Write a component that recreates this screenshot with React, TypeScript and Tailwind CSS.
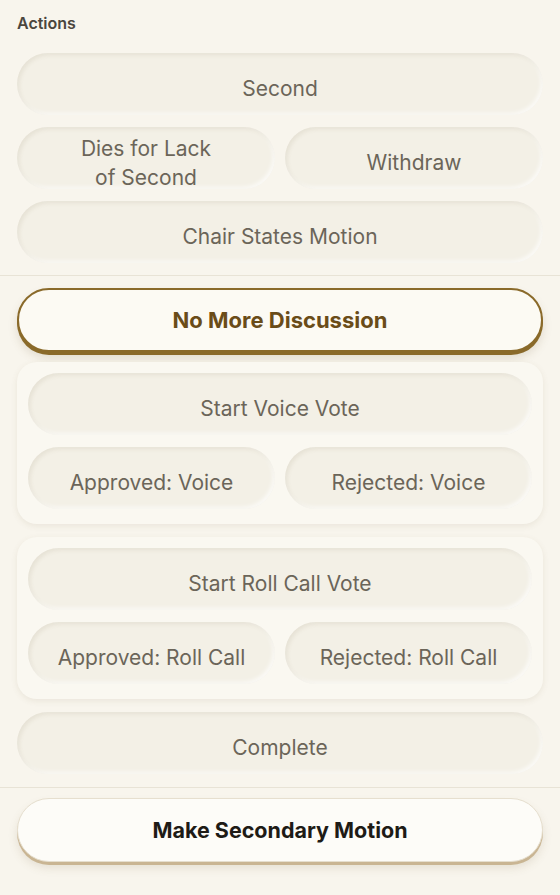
const inset =
  "bg-[#f3f0e6] text-[#6b6559] rounded-full shadow-[inset_2px_2px_4px_rgba(120,100,60,0.10),inset_-2px_-2px_4px_rgba(255,255,255,0.7)]";

const ActionButton = ({ label, className = "" }: { label: string; className?: string }) => (
  <button
    className={`${inset} h-[62px] w-full flex items-center justify-center px-6 pt-[9px] text-[21px] leading-[29px] text-center ${className}`}
  >
    {label}
  </button>
);

const Panel = ({ children }: { children: React.ReactNode }) => (
  <div className="bg-[#faf8f1] rounded-[20px] pt-[11px] px-[11px] pb-[15px] flex flex-col gap-[12px] shadow-[0_2px_6px_rgba(120,100,60,0.10)]">
    {children}
  </div>
);

export default function App() {
  return (
    <div
      className="min-h-[895px] w-[560px] bg-[#f8f5ed] text-[#6b6559]"
      style={{ fontFamily: "Inter, 'Noto Sans', sans-serif" }}
    >
      <div className="px-[17px] pt-[14px] pb-[12px] flex flex-col gap-[12px]">
        <h3 className="text-[16px] font-semibold text-[#4b463e] leading-[19px] mb-[8px]">Actions</h3>
        <ActionButton label="Second" />
        <div className="grid grid-cols-2 gap-[10px]">
          <ActionButton label="Dies for Lack of Second" className="px-14" />
          <ActionButton label="Withdraw" />
        </div>
        <ActionButton label="Chair States Motion" />
      </div>

      <div className="border-t border-[#e8e3d6]" />

      <div className="px-[17px] pt-[12px] pb-[13px] flex flex-col gap-[13px]">
        <button className="h-[64px] w-full mb-[-3px] rounded-full bg-[#fcfaf3] border-2 border-[#8a6a2a] shadow-[0_3px_0_#8a6a2a,0_6px_10px_rgba(120,100,60,0.18)] text-[22px] font-bold text-[#6a4c18]">
          No More Discussion
        </button>
        <Panel>
          <ActionButton label="Start Voice Vote" />
          <div className="grid grid-cols-2 gap-[10px]">
            <ActionButton label="Approved: Voice" />
            <ActionButton label="Rejected: Voice" />
          </div>
        </Panel>
        <Panel>
          <ActionButton label="Start Roll Call Vote" />
          <div className="grid grid-cols-2 gap-[10px]">
            <ActionButton label="Approved: Roll Call" />
            <ActionButton label="Rejected: Roll Call" />
          </div>
        </Panel>
        <ActionButton label="Complete" />
      </div>

      <div className="border-t border-[#e8e3d6]" />

      <div className="px-[17px] pt-[10px] pb-[20px]">
        <button className="h-[64px] w-full rounded-full bg-[#fdfcf8] border border-[#e6dfcf] shadow-[0_3px_0_#c9b593,0_6px_10px_rgba(120,100,60,0.15)] text-[21.5px] font-bold text-[#1e1b16]">
          Make Secondary Motion
        </button>
      </div>
    </div>
  );
}
